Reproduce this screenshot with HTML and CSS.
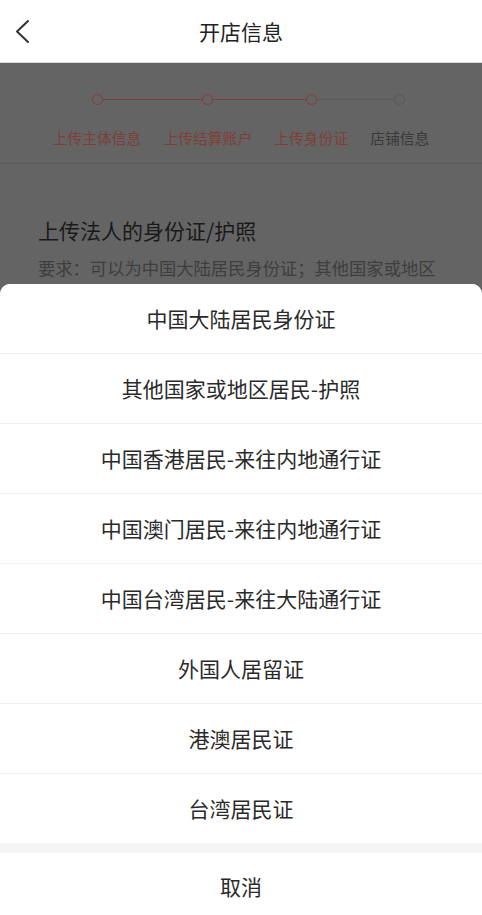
FILE: index.html
```html
<!DOCTYPE html>
<html lang="zh-CN">
<head>
<meta charset="utf-8">
<title>开店信息</title>
<link rel="stylesheet" href="styles.css">
</head>
<body>
<div class="page">
  <header class="nav">
    <svg class="back" width="20" height="30" viewBox="0 0 20 30"><polyline points="14,4 3,14.5 14,25" fill="none" stroke="#333" stroke-width="2" stroke-linecap="round" stroke-linejoin="round"/></svg>
    <h1 class="nav-title">开店信息</h1>
  </header>
  <main class="content">
    <div class="steps">
      <div class="step active">
        <div class="track"><span class="ln none"></span><span class="dot"></span><span class="ln"></span></div>
        <div class="label">上传主体信息</div>
      </div>
      <div class="step active">
        <div class="track"><span class="ln"></span><span class="dot"></span><span class="ln"></span></div>
        <div class="label">上传结算账户</div>
      </div>
      <div class="step active">
        <div class="track"><span class="ln"></span><span class="dot"></span><span class="ln off"></span></div>
        <div class="label">上传身份证</div>
      </div>
      <div class="step">
        <div class="track"><span class="ln"></span><span class="dot"></span><span class="ln none"></span></div>
        <div class="label">店铺信息</div>
      </div>
    </div>
    <section class="section">
      <h2 class="sec-title">上传法人的身份证/护照</h2>
      <p class="sec-desc">要求：可以为中国大陆居民身份证；其他国家或地区</p>
    </section>
  </main>
  <div class="sheet">
    <ul class="options">
      <li class="opt">中国大陆居民身份证</li>
      <li class="opt">其他国家或地区居民-护照</li>
      <li class="opt">中国香港居民-来往内地通行证</li>
      <li class="opt">中国澳门居民-来往内地通行证</li>
      <li class="opt">中国台湾居民-来往大陆通行证</li>
      <li class="opt">外国人居留证</li>
      <li class="opt">港澳居民证</li>
      <li class="opt">台湾居民证</li>
    </ul>
    <div class="cancel">取消</div>
  </div>
</div>
</body>
</html>
```
FILE: styles.css
```css
* { box-sizing: border-box; }
html, body { margin: 0; padding: 0; }
body {
  font-family: "Noto Sans CJK SC", "Noto Sans", sans-serif;
  background: #646464;
}
.page {
  position: relative;
  width: 482px;
  height: 915px;
  overflow: hidden;
  background: #646464;
}
.nav {
  height: 63px;
  background: #fff;
  border-bottom: 1px solid #dcdcdc;
  display: flex;
  align-items: center;
  justify-content: center;
  position: relative;
}
.back {
  position: absolute;
  left: 14px;
  top: 17px;
}
.nav-title {
  margin: 0;
  font-size: 21px;
  font-weight: 400;
  color: #222;
}
.content {
  background: #646464;
}
.steps {
  display: flex;
  justify-content: center;
  padding-top: 31px;
  padding-bottom: 14px;
  border-bottom: 1px solid #5a5a5a;
}
.step {
  display: flex;
  flex-direction: column;
  align-items: stretch;
}
.track {
  display: flex;
  align-items: center;
  height: 11px;
}
.ln {
  flex: 1;
  height: 1.5px;
  background: #7f3f39;
}
.ln.off { background: #585858; }
.ln.none { background: transparent; }
.step:not(.active) .ln { background: #585858; }
.step:not(.active) .ln.none { background: transparent; }
.dot {
  width: 11px;
  height: 11px;
  border-radius: 50%;
  border: 1.5px solid #7f3f39;
  flex: none;
}
.step:not(.active) .dot { border-color: #585858; }
.label {
  margin-top: 22px;
  padding: 0 11px;
  font-size: 14.8px;
  line-height: 22px;
  color: #7f3f39;
  white-space: nowrap;
}
.step:not(.active) .label { color: #3a3a3a; }
.section {
  padding: 51px 38px 0;
}
.sec-title {
  margin: 0;
  font-size: 21px;
  font-weight: 400;
  line-height: 30px;
  color: #1a1a1a;
}
.sec-desc {
  margin: 11px 0 0;
  font-size: 17.3px;
  line-height: 24px;
  color: #3e3e3e;
  white-space: nowrap;
}
.sheet {
  position: absolute;
  left: 0;
  right: 0;
  top: 284px;
  background: #f5f5f5;
  border-radius: 10px 10px 0 0;
  overflow: hidden;
}
.options {
  list-style: none;
  margin: 0;
  padding: 0;
  background: #fff;
}
.opt {
  height: 70px;
  padding-bottom: 1px;
  display: flex;
  align-items: center;
  justify-content: center;
  font-size: 21px;
  color: #2a2a2a;
  border-bottom: 1px solid #f0f0f0;
}
.opt:last-child { height: 69px; border-bottom: none; }
.cancel {
  margin-top: 10px;
  height: 66px;
  background: #fff;
  display: flex;
  align-items: center;
  justify-content: center;
  font-size: 21px;
  color: #2a2a2a;
}
```
